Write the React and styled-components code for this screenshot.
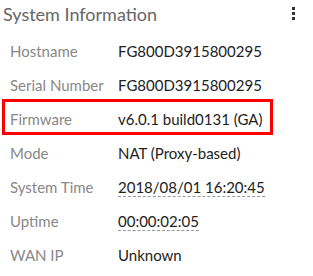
import React from "react";
import styled, { createGlobalStyle } from "styled-components";

const Global = createGlobalStyle`
  html, body { margin: 0; padding: 0; background: #fff; }
  body { font-family: Lato, "Noto Sans", sans-serif; }
`;

const Widget = styled.div`
  width: 313px;
  height: 276px;
  box-sizing: border-box;
  overflow: hidden;
  background: #fff;
`;

const Header = styled.div`
  height: 34px;
  display: flex;
  align-items: flex-start;
  justify-content: space-between;
  padding: 2px 16px 0 3px;
  box-sizing: border-box;
`;

const Title = styled.h2`
  margin: 0;
  font-size: 18px;
  font-weight: 400;
  color: #666;
  line-height: 24px;
`;

const Menu = styled.button`
  border: 0;
  background: none;
  padding: 5px 2px;
  display: flex;
  flex-direction: column;
  gap: 2px;
  cursor: pointer;
`;

const Dot = styled.span`
  width: 3px;
  height: 3px;
  background: #333;
  display: block;
`;

const List = styled.div`
  width: 271px;
  margin-left: 2px;
  display: flex;
  flex-direction: column;
`;

const Row = styled.div`
  position: relative;
  height: 34px;
  display: flex;
  align-items: center;
  padding-left: 8px;
  box-sizing: border-box;
  font-size: 15px;
  &::after {
    content: "";
    display: ${(p) => (p.$highlight ? "block" : "none")};
    position: absolute;
    left: 0;
    right: 0;
    top: -3px;
    bottom: 1px;
    border: 3px solid #f00;
    pointer-events: none;
  }
`;

const Label = styled.span`
  width: 108px;
  flex: none;
  color: #888;
`;

const Value = styled.span`
  color: #222;
  border-bottom: ${(p) => (p.$dashed ? "1px dashed #999" : "1px solid transparent")};
  line-height: 18px;
`;

const rows = [
  ["Hostname", "FG800D3915800295"],
  ["Serial Number", "FG800D3915800295"],
  ["Firmware", "v6.0.1 build0131 (GA)", false, true],
  ["Mode", "NAT (Proxy-based)"],
  ["System Time", "2018/08/01 16:20:45", true],
  ["Uptime", "00:00:02:05", true],
  ["WAN IP", "Unknown"],
];

export default function App() {
  return (
    <>
      <Global />
      <Widget>
        <Header>
          <Title>System Information</Title>
          <Menu aria-label="menu">
            <Dot />
            <Dot />
            <Dot />
          </Menu>
        </Header>
        <List>
          {rows.map(([l, v, dashed, hl]) => (
            <Row key={l} $highlight={hl}>
              <Label>{l}</Label>
              <Value $dashed={dashed}>{v}</Value>
            </Row>
          ))}
        </List>
      </Widget>
    </>
  );
}
